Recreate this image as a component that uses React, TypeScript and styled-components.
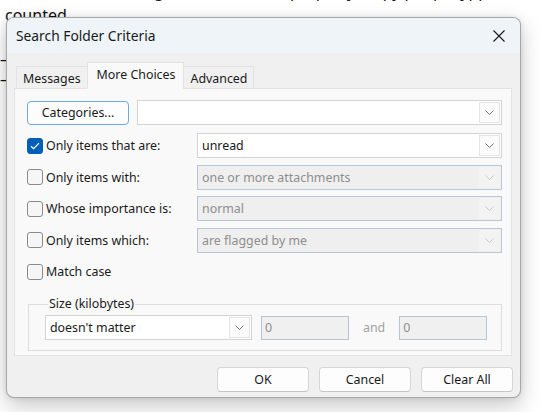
import styled, { createGlobalStyle } from 'styled-components'

const UI_FONT = '12.4px'

const GlobalStyle = createGlobalStyle`
  html, body {
    margin: 0;
    padding: 0;
    background: #ffffff;
  }
  body {
    font-family: 'Noto Sans', 'Open Sans', sans-serif;
    color: #1a1a1a;
  }
  * { box-sizing: border-box; }
`

// page behind the dialog

const Page = styled.div`
  position: relative;
  width: 541px;
  height: 412px;
  overflow: hidden;
`

const Doc = styled.div`
  display: flex;
  flex-direction: column;
  margin-top: -19px;
  font-size: 16px;
  line-height: 20px;
  color: #111;
  white-space: nowrap;
`

const DocLine = styled.div<{ $indent?: number; $gap?: number }>`
  padding-left: ${({ $indent = 5 }) => $indent}px;
  margin-top: ${({ $gap = 0 }) => $gap}px;
  height: 20px;
`

// dialog frame

const Dialog = styled.div`
  position: absolute;
  left: 6px;
  top: 17px;
  width: 515px;
  height: 381px;
  border: 1px solid rgba(0, 0, 0, 0.3);
  border-radius: 8px;
  background: #f0f0f0;
  box-shadow: 0 8px 22px rgba(0, 0, 0, 0.22), 0 0 5px rgba(0, 0, 0, 0.1);
  overflow: hidden;
  display: flex;
  flex-direction: column;
`

const TitleBar = styled.div`
  flex: none;
  height: 35px;
  background: #eef4f8;
  display: flex;
  align-items: center;
  justify-content: space-between;
  padding: 0 15px 0 9px;
  font-size: 13.8px;
`

const CloseIcon = () =>
  <svg width="12" height="12" viewBox="0 0 12 12">
    <path d="M0.5 0.5 L11.5 11.5 M11.5 0.5 L0.5 11.5" stroke="#1a1a1a" strokeWidth="1.1" fill="none"/>
  </svg>

const Body = styled.div`
  flex: 1;
  display: flex;
  flex-direction: column;
  padding: 9px 8px 0 7px;
`

// tabs

const TabStrip = styled.div`
  display: flex;
  align-items: flex-end;
  height: 27px;
  padding-left: 2px;
  margin-bottom: -1px;
  position: relative;
  z-index: 1;
`

const Tab = styled.div<{ $active?: boolean }>`
  font-size: ${UI_FONT};
  display: flex;
  align-items: ${({ $active }) => $active ? 'flex-start' : 'center'};
  padding: ${({ $active }) => $active ? '3px 8px 0 9px' : '1px 6px 0 6px'};
  height: ${({ $active }) => $active ? '27px' : '23px'};
  background: ${({ $active }) => $active ? '#f9f9f9' : '#f0f0f0'};
  border: 1px solid #e3e3e3;
  border-bottom: ${({ $active }) => $active ? '1px solid #f9f9f9' : '1px solid #e3e3e3'};
  & + & { margin-left: -1px; }
`

const Panel = styled.div`
  height: 268px;
  background: #f9f9f9;
  border: 1px solid #e3e3e3;
  padding: 11px 9px 0 12px;
  display: flex;
  flex-direction: column;
`

// form parts

const Row = styled.div<{ $gap?: number }>`
  display: flex;
  align-items: center;
  height: 25px;
  margin-bottom: ${({ $gap = 6.5 }) => $gap}px;
`

const Button = styled.button<{ $default?: boolean; $width?: number }>`
  font-family: inherit;
  font-size: ${UI_FONT};
  color: #1a1a1a;
  width: ${({ $width = 92 }) => $width}px;
  height: ${({ $default }) => $default ? 24 : 25}px;
  padding: 0;
  background: #fdfdfd;
  border: 1px solid ${({ $default }) => $default ? '#6ea8e4' : '#d6d6d6'};
  border-bottom-color: ${({ $default }) => $default ? '#6ea8e4' : '#c4c4c4'};
  border-radius: 4px;
  flex: none;
`

const ComboBox = styled.div<{ $disabled?: boolean; $left?: number; $width?: number }>`
  display: flex;
  align-items: center;
  height: 25px;
  margin-left: ${({ $left = 0 }) => $left}px;
  ${({ $width }) => $width ? `width: ${$width}px; flex: none;` : 'flex: 1;'}
  background: ${({ $disabled }) => $disabled ? '#efefef' : '#ffffff'};
  border: 1px solid ${({ $disabled }) => $disabled ? '#b8c7da' : '#d3d3d3'};
  color: ${({ $disabled }) => $disabled ? '#8e8e8e' : '#1a1a1a'};
  font-size: ${UI_FONT};
  padding: 1px 1px 1px 4px;
`

const ComboText = styled.span`
  flex: 1;
  white-space: nowrap;
  overflow: hidden;
`

const ArrowBox = styled.span<{ $disabled?: boolean }>`
  flex: none;
  width: 21px;
  height: 100%;
  display: flex;
  align-items: center;
  justify-content: center;
  background: ${({ $disabled }) => $disabled ? '#f3f3f3' : '#fbfbfb'};
  border: 1px solid ${({ $disabled }) => $disabled ? '#f3f3f3' : '#e4e4e4'};
`

const Chevron = ({ color }: { color: string }) =>
  <svg width="9" height="5" viewBox="0 0 9 5">
    <path d="M0.5 0.5 L4.5 4.5 L8.5 0.5" stroke={color} strokeWidth="1" fill="none"/>
  </svg>

const Combo = ({ value = '', disabled, left, width }: { value?: string; disabled?: boolean; left?: number; width?: number }) =>
  <ComboBox $disabled={disabled} $left={left} $width={width}>
    <ComboText>{value}</ComboText>
    <ArrowBox $disabled={disabled}>
      <Chevron color={disabled ? '#c9c9c9' : '#707070'}/>
    </ArrowBox>
  </ComboBox>

const CheckLabel = styled.label<{ $width?: number }>`
  display: flex;
  align-items: center;
  gap: 3px;
  font-size: ${UI_FONT};
  white-space: nowrap;
  ${({ $width }) => $width ? `width: ${$width}px; flex: none;` : ''}
`

const Box = styled.span<{ $checked?: boolean }>`
  flex: none;
  width: 16px;
  height: 16px;
  border-radius: 3px;
  display: flex;
  align-items: center;
  justify-content: center;
  background: ${({ $checked }) => $checked ? '#005fb8' : '#f6f6f6'};
  border: 1px solid ${({ $checked }) => $checked ? '#005fb8' : '#8a8a8a'};
`

const Check = ({ label, checked, width }: { label: string; checked?: boolean; width?: number }) =>
  <CheckLabel $width={width}>
    <Box $checked={checked}>
      {checked &&
        <svg width="10" height="8" viewBox="0 0 10 8">
          <path d="M1 4.2 L3.6 6.6 L9 1.2" stroke="#ffffff" strokeWidth="1.2" fill="none"/>
        </svg>
      }
    </Box>
    {label}
  </CheckLabel>

const Group = styled.fieldset`
  margin: 11px 0 0 1px;
  padding: 2px 14px 10px 16px;
  border: 1px solid #dedede;
  display: flex;
  align-items: center;
`

const Legend = styled.legend`
  font-size: ${UI_FONT};
  padding: 0 1px;
  margin-left: 3px;
  line-height: 18px;
`

const TextBox = styled.div<{ $width?: number; $left?: number }>`
  width: ${({ $width = 88 }) => $width}px;
  margin-left: ${({ $left = 0 }) => $left}px;
  height: 24px;
  flex: none;
  background: #f0f0f0;
  border: 1px solid #b5c5d8;
  color: #8e8e8e;
  font-size: ${UI_FONT};
  padding: 1px 3px;
  line-height: 19px;
`

const And = styled.span`
  font-size: ${UI_FONT};
  color: #a2a2a2;
  margin: 0 14px 0 14px;
`

const ButtonBar = styled.div`
  display: flex;
  justify-content: flex-end;
  gap: 10px;
  margin-top: 11px;
  margin-right: -1px;
`

export default function App() {
  return (
    <Page>
      <GlobalStyle/>
      <Doc>
        <DocLine $indent={150}>ignore the unread property. Copy people ypp items of pages</DocLine>
        <DocLine $gap={4}>counted</DocLine>
        <DocLine $indent={0} $gap={24}>–</DocLine>
        <DocLine $indent={0}>–</DocLine>
      </Doc>

      <Dialog>
        <TitleBar>
          Search Folder Criteria
          <CloseIcon/>
        </TitleBar>

        <Body>
          <TabStrip>
            <Tab>Messages</Tab>
            <Tab $active>More Choices</Tab>
            <Tab>Advanced</Tab>
          </TabStrip>

          <Panel>
            <Row $gap={8}>
              <Button $default $width={102}>Categories...</Button>
              <Combo left={8}/>
            </Row>
            <Row>
              <Check label="Only items that are:" checked width={170}/>
              <Combo value="unread"/>
            </Row>
            <Row>
              <Check label="Only items with:" width={170}/>
              <Combo value="one or more attachments" disabled/>
            </Row>
            <Row>
              <Check label="Whose importance is:" width={170}/>
              <Combo value="normal" disabled/>
            </Row>
            <Row>
              <Check label="Only items which:" width={170}/>
              <Combo value="are flagged by me" disabled/>
            </Row>
            <Row $gap={0}>
              <Check label="Match case"/>
            </Row>

            <Group>
              <Legend>Size (kilobytes)</Legend>
              <Combo value="doesn't matter" width={207}/>
              <TextBox $left={9}>0</TextBox>
              <And>and</And>
              <TextBox>0</TextBox>
            </Group>
          </Panel>

          <ButtonBar>
            <Button>OK</Button>
            <Button>Cancel</Button>
            <Button>Clear All</Button>
          </ButtonBar>
        </Body>
      </Dialog>
    </Page>
  )
}
